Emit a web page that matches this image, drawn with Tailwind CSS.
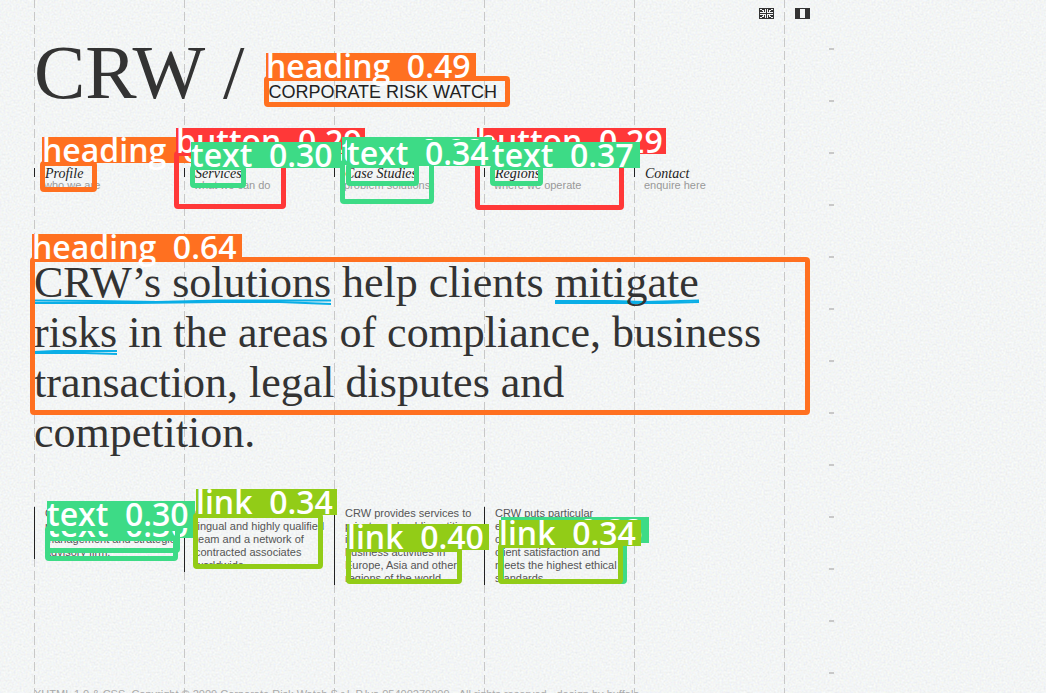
<!DOCTYPE html>
<html lang="en">
<head>
<meta charset="utf-8">
<title>CRW / Corporate Risk Watch</title>
<script src="https://cdn.jsdelivr.net/npm/@tailwindcss/browser@4"></script>
</head>
<body class="relative h-screen overflow-hidden bg-[#f3f5f5] font-['Liberation_Sans',Arial,sans-serif] text-[#333]">
<!-- paper grain -->
<svg class="absolute inset-0 -z-10 h-full w-full" aria-hidden="true">
  <filter id="grain" x="0" y="0" width="100%" height="100%" color-interpolation-filters="sRGB"><feTurbulence type="fractalNoise" baseFrequency="0.5" numOctaves="2" seed="4"/><feColorMatrix values="0.08 0.04 0 0 0.891  0.04 0.08 0 0 0.9  0 0.04 0.08 0 0.9  0 0 0 0 1"/></filter>
  <rect width="100%" height="100%" filter="url(#grain)"/>
</svg>
<!-- dashed column guides and ruler ticks -->
<div class="absolute inset-0 -z-10 flex pl-[34px]" aria-hidden="true">
  <div class="w-[150px] shrink-0"><div class="h-full w-px bg-[repeating-linear-gradient(to_bottom,#c8c8c8_0px,#c8c8c8_8px,transparent_8px,transparent_12px,#c8c8c8_12px,#c8c8c8_13px)]"></div></div>
  <div class="w-[150px] shrink-0"><div class="h-full w-px bg-[repeating-linear-gradient(to_bottom,#c8c8c8_0px,#c8c8c8_8px,transparent_8px,transparent_12px,#c8c8c8_12px,#c8c8c8_13px)]"></div></div>
  <div class="w-[150px] shrink-0"><div class="h-full w-px bg-[repeating-linear-gradient(to_bottom,#c8c8c8_0px,#c8c8c8_8px,transparent_8px,transparent_12px,#c8c8c8_12px,#c8c8c8_13px)]"></div></div>
  <div class="w-[150px] shrink-0"><div class="h-full w-px bg-[repeating-linear-gradient(to_bottom,#c8c8c8_0px,#c8c8c8_8px,transparent_8px,transparent_12px,#c8c8c8_12px,#c8c8c8_13px)]"></div></div>
  <div class="w-[150px] shrink-0"><div class="h-full w-px bg-[repeating-linear-gradient(to_bottom,#c8c8c8_0px,#c8c8c8_8px,transparent_8px,transparent_12px,#c8c8c8_12px,#c8c8c8_13px)]"></div></div>
  <div class="w-[45px] shrink-0"><div class="h-full w-px bg-[repeating-linear-gradient(to_bottom,#c8c8c8_0px,#c8c8c8_8px,transparent_8px,transparent_12px,#c8c8c8_12px,#c8c8c8_13px)]"></div></div>
  <div class="h-full w-[5px] bg-[repeating-linear-gradient(to_bottom,transparent_0px,transparent_48px,#c8c8c8_48px,#c8c8c8_50px,transparent_50px,transparent_52px)]"></div>
</div>

<div class="ml-[34px] max-w-[776px]">
  <div class="flex justify-end gap-[21px] pt-2">
    <a href="#en" aria-label="English"><svg width="15" height="11" viewBox="0 0 15 11" shape-rendering="crispEdges"><path fill="#333" d="M0 0h15v11H0z"/><path fill="#f3f5f5" d="M6 1h1v3H6zM8 1h1v3H8zM6 7h1v3H6zM8 7h1v3H8zM1 4h6v1H1zM8 4h6v1H8zM1 6h6v1H1zM8 6h6v1H8zM1 1h2v1H1zM3 2h2v1H3zM4 3h1v1H4zM12 1h2v1h-2zM10 2h2v1h-2zM10 3h1v1h-1zM1 9h2v1H1zM3 8h2v1H3zM4 7h1v1H4zM12 9h2v1h-2zM10 8h2v1h-2zM10 7h1v1h-1z"/></svg></a>
    <a href="#it" aria-label="Italiano"><svg width="15" height="11" viewBox="0 0 15 11" shape-rendering="crispEdges"><path fill="#333" d="M0 0h15v11H0z"/><path fill="#f3f5f5" d="M5 1h5v9H5z"/></svg></a>
  </div>
  <header class="flex items-baseline gap-[24px] pt-2">
    <h1 class="font-['Liberation_Serif',serif] text-[77px] leading-[90px] whitespace-nowrap">CRW /</h1>
    <p class="text-[18px] leading-6 whitespace-nowrap text-[#222]">CORPORATE RISK WATCH</p>
  </header>
  <nav class="mt-[50px] flex">
    <a href="#profile" class="block w-[150px]"><span class="flex h-[12px] items-start"><i class="mt-[1px] h-[9px] w-px bg-[#222]"></i><span class="ml-[10px] font-['Liberation_Serif',serif] text-[14px] leading-[13px] italic text-[#222]">Profile</span></span><span class="ml-[10px] block text-[11px] leading-[13px] text-[#999]">who we are</span></a>
    <a href="#services" class="block w-[150px]"><span class="flex h-[12px] items-start"><i class="mt-[1px] h-[9px] w-px bg-[#222]"></i><span class="ml-[10px] font-['Liberation_Serif',serif] text-[14px] leading-[13px] italic text-[#222]">Services</span></span><span class="ml-[10px] block text-[11px] leading-[13px] text-[#999]">what we can do</span></a>
    <a href="#cases" class="block w-[150px]"><span class="flex h-[12px] items-start"><i class="mt-[1px] h-[9px] w-px bg-[#222]"></i><span class="ml-[10px] font-['Liberation_Serif',serif] text-[14px] leading-[13px] italic text-[#222]">Case Studies</span></span><span class="ml-[10px] block text-[11px] leading-[13px] text-[#999]">problem solutions</span></a>
    <a href="#regions" class="block w-[150px]"><span class="flex h-[12px] items-start"><i class="mt-[1px] h-[9px] w-px bg-[#222]"></i><span class="ml-[10px] font-['Liberation_Serif',serif] text-[14px] leading-[13px] italic text-[#222]">Regions</span></span><span class="ml-[10px] block text-[11px] leading-[13px] text-[#999]">where we operate</span></a>
    <a href="#contact" class="block w-[150px]"><span class="flex h-[12px] items-start"><i class="mt-[1px] h-[9px] w-px bg-[#222]"></i><span class="ml-[10px] font-['Liberation_Serif',serif] text-[14px] leading-[13px] italic text-[#222]">Contact</span></span><span class="ml-[10px] block text-[11px] leading-[13px] text-[#999]">enquire here</span></a>
  </nav>
  <h2 class="mt-[66px] font-['Liberation_Serif',serif] text-[44px] leading-[50px] whitespace-nowrap">
    <a href="#solutions" class="relative inline-block">CRW’s solutions<svg class="absolute bottom-[3px] left-0 -z-10 h-[6px] w-full" viewBox="0 0 290 6" preserveAspectRatio="none" fill="none" stroke="#0aaee6"><path stroke-width="2" d="M0 1.500L60 2L120 3L180 1.500L290 1.500"/><path stroke-width="2" d="M0 4H100L180 3L240 3L290 5"/></svg></a> help clients <a href="#mitigate" class="relative inline-block">mitigate<svg class="absolute bottom-[3px] left-0 -z-10 h-[6px] w-full" viewBox="0 0 146 6" preserveAspectRatio="none" fill="none" stroke="#0aaee6"><path stroke-width="2" d="M0 2H60L90 3L146 1.500"/><path stroke-width="2" d="M0 4H110L146 3"/></svg></a><br><a href="#mitigate" class="relative inline-block">risks<svg class="absolute bottom-[3px] left-0 -z-10 h-[6px] w-full" viewBox="0 0 82 6" preserveAspectRatio="none" fill="none" stroke="#0aaee6"><path stroke-width="2" d="M0 3L20 2H82"/><path stroke-width="2" d="M0 4H50L82 5"/></svg></a> in the areas of compliance, business<br>transaction, legal disputes and<br>competition.</h2>
  <section class="mt-[49px] flex items-start text-[11px] leading-[13px] whitespace-nowrap text-[#555]">
    <div class="w-[150px]"><p class="border-l border-[#222] pl-[10px]">CRW is an independent<br>risk consultancy, risk<br>management and strategic<br>advisory firm.</p></div>
    <div class="w-[150px]"><p class="border-l border-[#222] pl-[10px]">CRW relies on a multi-<br>lingual and highly qualified<br>team and a network of<br>contracted associates<br>worldwide.</p></div>
    <div class="w-[150px]"><p class="border-l border-[#222] pl-[10px]">CRW provides services to<br>private and public entities<br>in support of their<br>business activities in<br>Europe, Asia and other<br>regions of the world.</p></div>
    <div class="w-[150px]"><p class="border-l border-[#222] pl-[10px]">CRW puts particular<br>emphasis on quality,<br>confidentiality,<br>client satisfaction and<br>meets the highest ethical<br>standards.</p></div>
  </section>
  <footer class="mt-[103px] text-[11px] leading-[13px] whitespace-nowrap text-[#aaa]">XHTML 1.0 &amp; CSS. Copyright © 2009 Corporate Risk Watch S.r.l. P.Iva 05400270009 - All rights reserved - design by buffalo</footer>
</div>

<!-- detection overlay: boxes and their labels -->
<div class="pointer-events-none absolute inset-0 font-['Open_Sans',sans-serif] text-[32px] leading-[26px] font-semibold whitespace-pre text-white">
  <div class="absolute top-[76px] left-[264px] h-[31px] w-[246px] rounded-[4px] border-5 border-[#ff7020]"></div>
  <div class="absolute top-[53px] left-[266px] h-[26px] w-[210px] bg-[#ff7020]">heading  0.49</div>
  <div class="absolute top-[161px] left-[40px] h-[31px] w-[57px] rounded-[4px] border-5 border-[#ff7020]"></div>
  <div class="absolute top-[137px] left-[42px] h-[26px] w-[210px] bg-[#ff7020]">heading  0.31</div>
  <div class="absolute top-[151px] left-[174px] h-[58px] w-[112px] rounded-[4px] border-5 border-[#ff3838]"></div>
  <div class="absolute top-[128px] left-[176px] h-[26px] w-[189px] bg-[#ff3838]">button  0.29</div>
  <div class="absolute top-[152px] left-[475px] h-[58px] w-[149px] rounded-[4px] border-5 border-[#ff3838]"></div>
  <div class="absolute top-[128px] left-[477px] h-[26px] w-[189px] bg-[#ff3838]">button  0.29</div>
  <div class="absolute top-[165px] left-[190px] h-[23px] w-[56px] rounded-[4px] border-5 border-[#3ddb86]"></div>
  <div class="absolute top-[142px] left-[191px] h-[26px] w-[150px] bg-[#3ddb86]">text  0.30</div>
  <div class="absolute top-[160px] left-[340px] h-[44px] w-[94px] rounded-[4px] border-5 border-[#3ddb86]"></div>
  <div class="absolute top-[137px] left-[342px] h-[26px] w-[150px] bg-[#3ddb86]">text  0.28</div>
  <div class="absolute top-[163px] left-[346px] h-[23px] w-[73px] rounded-[4px] border-5 border-[#3ddb86]"></div>
  <div class="absolute top-[140px] left-[347px] h-[26px] w-[150px] bg-[#3ddb86]">text  0.34</div>
  <div class="absolute top-[165px] left-[490px] h-[21px] w-[53px] rounded-[4px] border-5 border-[#3ddb86]"></div>
  <div class="absolute top-[142px] left-[492px] h-[26px] w-[148px] bg-[#3ddb86]">text  0.37</div>
  <div class="absolute top-[257px] left-[30px] h-[158px] w-[780px] rounded-[4px] border-5 border-[#ff7020]"></div>
  <div class="absolute top-[234px] left-[32px] h-[26px] w-[210px] bg-[#ff7020]">heading  0.64</div>
  <div class="absolute top-[536px] left-[45px] h-[25px] w-[133px] rounded-[4px] border-5 border-[#3ddb86]"></div>
  <div class="absolute top-[512px] left-[47px] h-[26px] w-[148px] bg-[#3ddb86]">text  0.30</div>
  <div class="absolute top-[526px] left-[45px] h-[27px] w-[135px] rounded-[4px] border-5 border-[#3ddb86]"></div>
  <div class="absolute top-[501px] left-[47px] h-[27px] w-[148px] bg-[#3ddb86]">text  0.30</div>
  <div class="absolute top-[513px] left-[193px] h-[56px] w-[130px] rounded-[4px] border-5 border-[#92cc17]"></div>
  <div class="absolute top-[489px] left-[196px] h-[26px] w-[141px] bg-[#92cc17]">link  0.34</div>
  <div class="absolute top-[547px] left-[346px] h-[37px] w-[116px] rounded-[4px] border-5 border-[#92cc17]"></div>
  <div class="absolute top-[524px] left-[347px] h-[26px] w-[142px] bg-[#92cc17]">link  0.40</div>
  <div class="absolute top-[541px] left-[499px] h-[43px] w-[128px] rounded-[4px] border-5 border-[#3ddb86]"></div>
  <div class="absolute top-[517px] left-[501px] h-[26px] w-[148px] bg-[#3ddb86]">text  0.33</div>
  <div class="absolute top-[543px] left-[498px] h-[41px] w-[125px] rounded-[4px] border-5 border-[#92cc17]"></div>
  <div class="absolute top-[520px] left-[499px] h-[26px] w-[142px] bg-[#92cc17]">link  0.34</div>
</div>
</body>
</html>
